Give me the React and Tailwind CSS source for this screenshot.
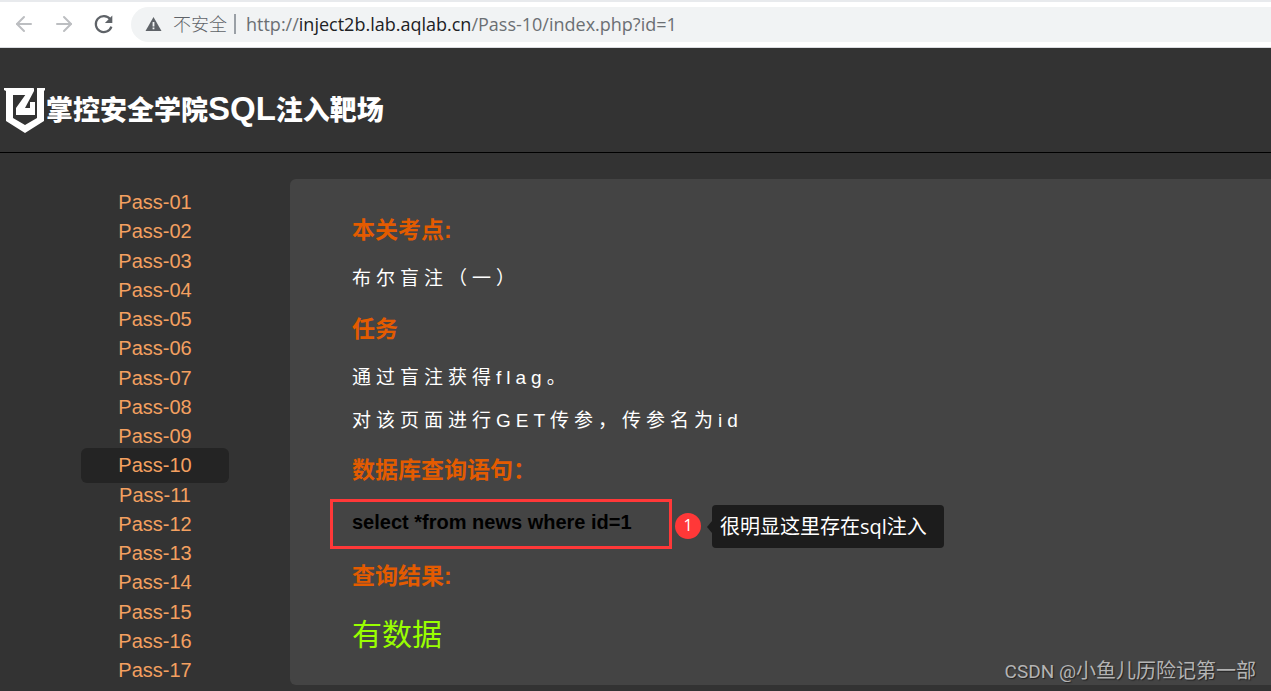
import { ArrowLeft, ArrowRight } from 'lucide-react';

const passes = Array.from({ length: 17 }, (_, i) => `Pass-${String(i + 1).padStart(2, '0')}`);
const currentPass = 'Pass-10';

function BrowserBar() {
  return (
    <div className="flex h-12 items-center border-t-2 border-b border-t-[#e8eaed] border-b-[#dadce0] bg-white pb-px pl-3 font-['Open_Sans','Noto_Sans_CJK_SC',sans-serif]">
      <button type="button" aria-label="Back" className="mr-4 text-[#bcbec1]">
        <ArrowLeft size={24} strokeWidth={2} />
      </button>
      <button type="button" aria-label="Forward" className="mr-4 text-[#bcbec1]">
        <ArrowRight size={24} strokeWidth={2} />
      </button>
      <button type="button" aria-label="Reload" className="mr-[15px] text-[#5f6368]">
        <svg className="h-6 w-6" viewBox="0 0 24 24" fill="none">
          <path d="M18.2 7.2A8 8 0 1 0 19.4 14.6" stroke="currentColor" strokeWidth="2.2" />
          <path d="M20.3 3.6V11h-7.4z" fill="currentColor" />
        </svg>
      </button>
      <div className="flex h-[35px] min-w-0 flex-1 items-center rounded-l-full bg-[#f1f3f4] pl-[14px]">
        <button type="button" className="flex shrink-0 items-center text-lg font-light text-[#5f6368]">
          <svg className="mr-[11px] h-4 w-[17px]" viewBox="0 0 17 16">
            <path d="M8.5 1L16.5 15H0.5z" fill="currentColor" />
            <path d="M7.6 6h1.8v4.5H7.6zM7.6 11.5h1.8v1.8H7.6z" fill="#f1f3f4" />
          </svg>
          不安全
        </button>
        <span className="mr-2 ml-[7px] h-5 w-0.5 shrink-0 bg-[#9aa0a6]" />
        <div
          role="textbox"
          aria-label="Address"
          contentEditable
          suppressContentEditableWarning
          className="min-w-0 flex-1 truncate pl-0.5 text-lg text-[#6b6f73] outline-none"
        >
          http://<span className="text-[#202124]">inject2b.lab.aqlab.cn</span>/Pass-10/index.php?id=1
        </div>
      </div>
    </div>
  );
}

function Header() {
  return (
    <header className="flex h-[105px] items-center border-b border-black pt-5 pl-1">
      <h1 className="flex items-center text-[27px] leading-10 font-black text-white">
        <svg className="mt-0.5 h-[46px] w-[42px]" viewBox="0 0 42 46">
          <path
            d="M0 0H30L24 7H9V30L21 37L33 30V0H41V2L40 3V33L21 45L2 33V3L0 2z"
            fill="#fff"
          />
          <path d="M30 0L22 6L12 20V27H31V14H26V20H21L30 3z" fill="#fff" />
        </svg>
        <span>
          掌控安全学院<span className="text-[33px] font-bold">SQL</span>注入靶场
        </span>
      </h1>
    </header>
  );
}

function Sidebar() {
  return (
    <nav className="w-[290px] shrink-0 pt-[9px] pr-[61px] pl-[81px]">
      <ul className="flex h-full flex-col justify-between">
        {passes.map((pass) => (
          <li key={pass} className="h-[29px]">
            <a
              href={`#${pass}`}
              className={`-my-[3px] block rounded-md py-[3px] text-center text-xl leading-[29px] text-[#f4a060] ${
                pass === currentPass ? 'bg-[#242424]' : ''
              }`}
            >
              {pass}
            </a>
          </li>
        ))}
      </ul>
    </nav>
  );
}

function Title({ className, children }) {
  return <h2 className={`text-[23px] leading-[30px] font-bold text-[#e35b00] ${className}`}>{children}</h2>;
}

function Line({ className, children }) {
  return <p className={`text-[19px] leading-7 tracking-[5px] text-white ${className}`}>{children}</p>;
}

// Red frame, step number and note laid over the query
function Annotation() {
  return (
    <>
      <div className="absolute -top-[9px] -left-[22px] h-[50px] w-[342px] border-3 border-[#ff3838]" />
      <div className="absolute top-[5px] left-[323px] flex h-[26px] w-[26px] items-center justify-center rounded-full bg-[#ff3838] pb-0.5 font-['Open_Sans',sans-serif] text-base text-white">
        1
      </div>
      <div className="absolute -top-[3px] left-[360px] flex h-[43px] w-[232px] items-center rounded-sm bg-[#1c1c1c] pl-2 font-['Open_Sans','Noto_Sans_CJK_SC',sans-serif] text-xl whitespace-nowrap text-white">
        <svg className="absolute top-4 -left-[5px] h-3 w-[5px]" viewBox="0 0 5 12">
          <path d="M5 0V12L0 6z" fill="#1c1c1c" />
        </svg>
        很明显这里存在sql注入
      </div>
    </>
  );
}

export default function App() {
  return (
    <div className="relative min-h-screen overflow-hidden bg-[#333] font-['Liberation_Sans','Noto_Sans_CJK_SC',sans-serif]">
      <BrowserBar />
      <Header />
      <div className="flex pt-[26px] pb-1.5">
        <Sidebar />
        <main className="min-w-0 flex-1 rounded-l-md bg-[#444] pt-9 pb-[30px] pl-[62px]">
          <Title>本关考点:</Title>
          <Line className="mt-5">布尔盲注（一）</Line>
          <Title className="mt-[21px]">任务</Title>
          <Line className="mt-5">通过盲注获得flag。</Line>
          <Line className="mt-[15px]">对该页面进行GET传参，传参名为id</Line>
          <Title className="mt-5">数据库查询语句：</Title>
          <div className="relative mt-[23px]">
            <p className="text-xl leading-7 font-bold text-black">select *from news where id=1</p>
            <Annotation />
          </div>
          <Title className="mt-[25px]">查询结果:</Title>
          <p className="mt-6 text-3xl leading-10 text-[#99ff00]">有数据</p>
        </main>
      </div>
      <div className="absolute right-[15px] bottom-1 font-['Roboto','Noto_Sans_CJK_SC',sans-serif] text-xl leading-[30px] text-[#b4b4b4] [text-shadow:1px_1px_1px_#222]">
        <span className="text-[19px]">CSDN @</span>小鱼儿历险记第一部
      </div>
    </div>
  );
}
